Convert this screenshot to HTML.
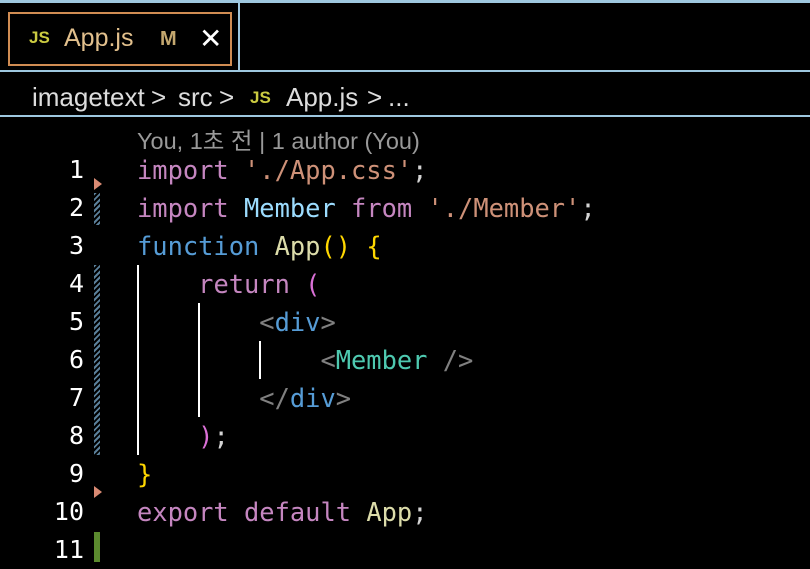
<!DOCTYPE html><html><head><style>
body{margin:0;width:810px;height:562px;background:#000;overflow:hidden;position:relative;font-family:"Liberation Sans","Noto Sans CJK KR",sans-serif}
.a{position:absolute}
.code{position:absolute;left:137px;top:151px;font-family:"DejaVu Sans Mono","Liberation Mono",monospace;font-size:25.4px;line-height:38px;color:#d4d4d4;white-space:pre}
.ln{position:absolute;left:30px;width:54px;text-align:right;top:151px;font-family:"DejaVu Sans Mono",monospace;font-size:25px;line-height:38px;color:#fff;white-space:pre}
.k{color:#c586c0}.s{color:#ce9178}.v{color:#9cdcfe}.f{color:#569cd6}.fn{color:#dcdcaa}.y{color:#ffd700}.p{color:#da70d6}.g{color:#808080}.c{color:#4ec9b0}
.hatch{position:absolute;left:94px;width:6px;background:repeating-linear-gradient(135deg,#5a7f99 0 2px,#000 2px 4px)}
.tri{position:absolute;left:94px;width:0;height:0;border-top:6px solid transparent;border-bottom:6px solid transparent;border-left:8px solid #d98a73}
.ig{position:absolute;width:2px;background:#fff}
.bc{position:absolute;top:82px;font-size:26px;color:#ddd;white-space:pre}
</style></head><body>
<div class="a" style="left:0;top:0;width:810px;height:3px;background:#9ec7df"></div>
<div class="a" style="left:8px;top:12px;width:220px;height:50px;border:2px solid #d08c52"></div>
<div class="a" style="left:29px;top:28px;font-size:17px;font-weight:bold;color:#cbcb41">JS</div>
<div class="a" style="left:64px;top:24px;font-size:25px;color:#e2c08d">App.js</div>
<div class="a" style="left:160px;top:28px;font-size:20px;font-weight:bold;color:#c4a86f">M</div>
<div class="a" style="left:199px;top:22px;font-size:28px;color:#fff">✕</div>
<div class="a" style="left:238px;top:3px;width:2px;height:68px;background:#9ec7df"></div>
<div class="a" style="left:0;top:70px;width:810px;height:2px;background:#9ec7df"></div>
<div class="bc" style="left:32px">imagetext</div>
<div class="bc" style="left:151px">&gt;</div>
<div class="bc" style="left:178px">src</div>
<div class="bc" style="left:219px">&gt;</div>
<div class="a" style="left:250px;top:88px;font-size:17px;font-weight:bold;color:#cbcb41">JS</div>
<div class="bc" style="left:286px">App.js</div>
<div class="bc" style="left:367px">&gt;</div>
<div class="bc" style="left:388px">...</div>
<div class="a" style="left:0;top:115px;width:810px;height:2px;background:#9ec7df"></div>
<div class="a" style="left:137px;top:122px;font-size:23.5px;color:#999;white-space:pre">You, 1초 전 | 1 author (You)</div>
<div class="ln">1
2
3
4
5
6
7
8
9
10
11</div>
<div class="hatch" style="top:193px;height:32px"></div>
<div class="hatch" style="top:265px;height:190px"></div>
<div class="tri" style="top:178px"></div>
<div class="tri" style="top:486px"></div>
<div class="a" style="left:94px;top:532px;width:6px;height:30px;background:#5b8a2e"></div>
<div class="ig" style="left:137px;top:265px;height:190px"></div>
<div class="ig" style="left:198px;top:303px;height:114px"></div>
<div class="ig" style="left:259px;top:341px;height:38px"></div>
<div class="code"><span class="k">import</span> <span class="s">'./App.css'</span>;
<span class="k">import</span> <span class="v">Member</span> <span class="k">from</span> <span class="s">'./Member'</span>;
<span class="f">function</span> <span class="fn">App</span><span class="y">()</span> <span class="y">{</span>
    <span class="k">return</span> <span class="p">(</span>
        <span class="g">&lt;</span><span class="f">div</span><span class="g">&gt;</span>
            <span class="g">&lt;</span><span class="c">Member</span> <span class="g">/&gt;</span>
        <span class="g">&lt;/</span><span class="f">div</span><span class="g">&gt;</span>
    <span class="p">)</span>;
<span class="y">}</span>
<span class="k">export</span> <span class="k">default</span> <span class="fn">App</span>;
</div>
</body></html>
